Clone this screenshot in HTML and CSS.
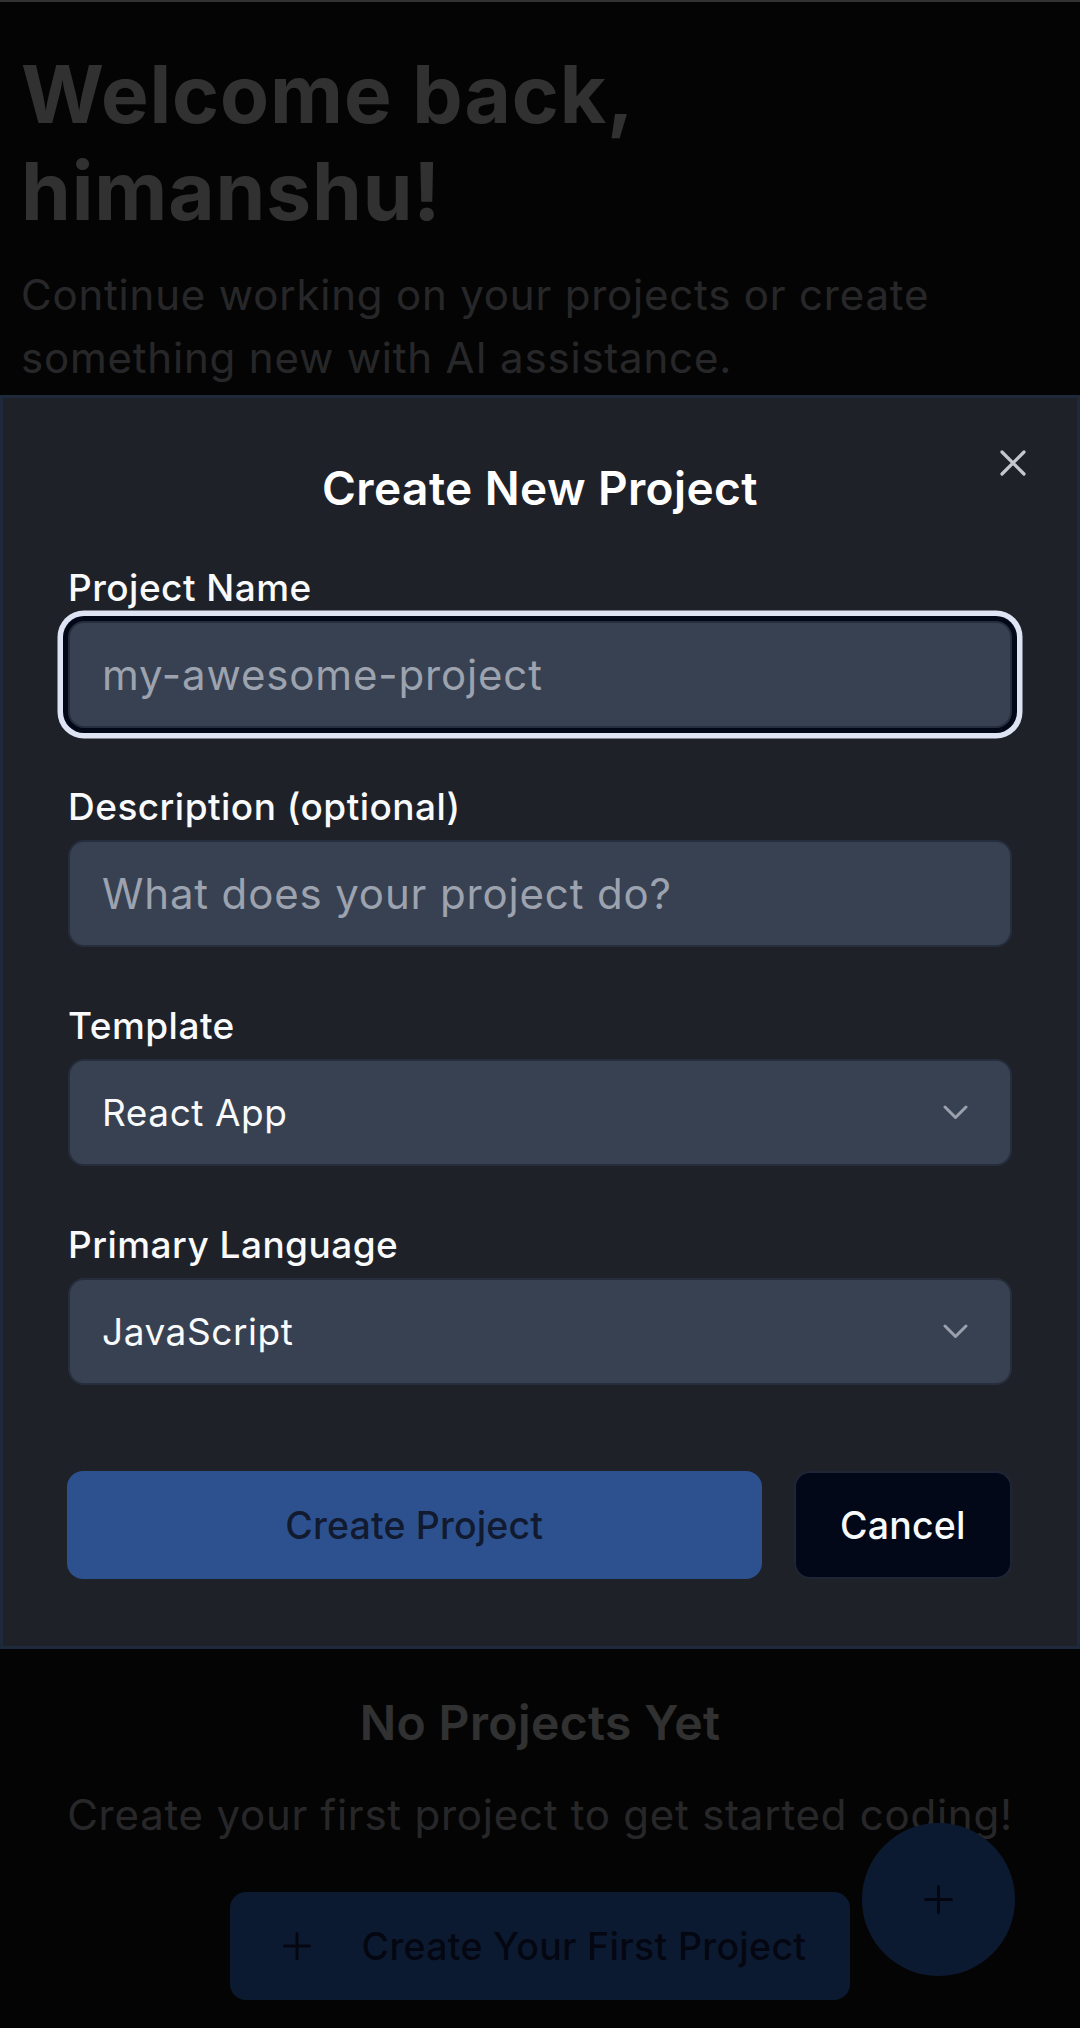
FILE: index.html
```html
<!DOCTYPE html>
<html lang="en">
<head>
<meta charset="utf-8">
<title>Dashboard – Create New Project</title>
<link rel="stylesheet" href="styles.css">
</head>
<body>
  <div class="page">
    <header class="welcome">
      <h1 class="welcome-title">Welcome back,<br>himanshu!</h1>
      <p class="welcome-sub">Continue working on your projects or create something new with AI assistance.</p>
    </header>

    <section class="empty">
      <h2 class="empty-title">No Projects Yet</h2>
      <p class="empty-text">Create your first project to get started coding!</p>
      <button class="btn-first" type="button">
        <svg class="icon-plus" viewBox="0 0 28 28" aria-hidden="true"><path d="M14 1.5V26.5M1.5 14H26.5"/></svg>
        <span>Create Your First Project</span>
      </button>
    </section>

    <button class="fab" type="button" aria-label="New project">
      <svg class="icon-plus" viewBox="0 0 28 28" aria-hidden="true"><path d="M14 1.5V26.5M1.5 14H26.5"/></svg>
    </button>
  </div>

  <div class="overlay"></div>

  <div class="modal" role="dialog" aria-labelledby="modal-title">
    <button class="modal-close" type="button" aria-label="Close">
      <svg viewBox="0 0 26 26" aria-hidden="true"><path d="M2 2L24 24M24 2L2 24"/></svg>
    </button>
    <h2 class="modal-title" id="modal-title">Create New Project</h2>
    <form class="form">
      <div class="field">
        <label class="label" for="pname">Project Name</label>
        <input class="input input-focused" id="pname" type="text" placeholder="my-awesome-project">
      </div>
      <div class="field">
        <label class="label" for="pdesc">Description (optional)</label>
        <input class="input" id="pdesc" type="text" placeholder="What does your project do?">
      </div>
      <div class="field">
        <label class="label">Template</label>
        <div class="select" role="combobox" aria-expanded="false">
          <span>React App</span>
          <svg class="chevron" viewBox="0 0 25 15" aria-hidden="true"><path d="M2 2L12.5 12.5L23 2"/></svg>
        </div>
      </div>
      <div class="field">
        <label class="label">Primary Language</label>
        <div class="select" role="combobox" aria-expanded="false">
          <span>JavaScript</span>
          <svg class="chevron" viewBox="0 0 25 15" aria-hidden="true"><path d="M2 2L12.5 12.5L23 2"/></svg>
        </div>
      </div>
      <div class="actions">
        <button class="btn-create" type="button">Create Project</button>
        <button class="btn-cancel" type="button">Cancel</button>
      </div>
    </form>
  </div>
</body>
</html>
```

FILE: styles.css
```css
* { box-sizing: border-box; }

html, body {
  margin: 0;
  padding: 0;
}

body {
  background: #161616;
  font-family: Inter, "Noto Sans", "Liberation Sans", sans-serif;
  color: #f5f5f5;
  width: 1080px;
  height: 2028px;
  overflow: hidden;
}

.page {
  border-top: 2px solid #ffffff;
  padding: 43px 21px 0;
  height: 2028px;
}

.welcome-title {
  margin: 0;
  font-size: 80px;
  line-height: 97px;
  font-weight: 700;
  letter-spacing: 0.9px;
  color: #f5f5f5;
}

.welcome-sub {
  margin: 24px 0 0;
  font-size: 42px;
  line-height: 63px;
  letter-spacing: 0.8px;
  color: #c0c3cc;
}

.empty {
  margin-top: 1297px;
  display: flex;
  flex-direction: column;
  align-items: center;
  text-align: center;
}

.empty-title {
  margin: 0;
  font-size: 48px;
  line-height: 74px;
  font-weight: 600;
  letter-spacing: 0.4px;
  color: #f5f5f5;
}

.empty-text {
  margin: 23px 0 0;
  font-size: 42px;
  line-height: 63px;
  letter-spacing: 0.76px;
  color: #c0c3cc;
  white-space: nowrap;
}

.btn-first {
  margin-top: 46px;
  height: 108px;
  display: flex;
  align-items: center;
  gap: 51px;
  padding: 0 44px 0 53px;
  border: none;
  border-radius: 16px;
  background: #3b82f6;
  color: #172554;
  font-family: inherit;
  font-size: 37.5px;
  font-weight: 500;
  letter-spacing: 0.3px;
}

.icon-plus {
  width: 28px;
  height: 28px;
  fill: none;
  stroke: currentColor;
  stroke-width: 3;
  stroke-linecap: round;
}

.fab {
  position: fixed;
  right: 65px;
  bottom: 52px;
  width: 153px;
  height: 153px;
  border-radius: 50%;
  border: none;
  background: #3b82f6;
  color: #172554;
  display: flex;
  align-items: center;
  justify-content: center;
  padding: 0;
}

.fab .icon-plus {
  width: 29px;
  height: 29px;
}

.overlay {
  position: fixed;
  inset: 0;
  background: rgba(0, 0, 0, 0.8);
}

.modal {
  position: fixed;
  top: 395px;
  left: 0;
  right: 0;
  background: #1f2128;
  border: 3px solid #1e293b;
  padding: 53px 65px 67px;
}

.modal-close {
  position: absolute;
  top: 52px;
  right: 51px;
  width: 26px;
  height: 26px;
  padding: 0;
  border: none;
  background: transparent;
  display: flex;
}

.modal-close svg {
  width: 26px;
  height: 26px;
  fill: none;
  stroke: #c4c7ce;
  stroke-width: 3.2;
  stroke-linecap: round;
}

.modal-title {
  margin: 0;
  text-align: center;
  font-size: 46px;
  line-height: 74px;
  font-weight: 600;
  color: #ffffff;
  letter-spacing: 0.4px;
}

.form {
  margin-top: 37px;
  display: flex;
  flex-direction: column;
  gap: 53px;
}

.field {
  display: flex;
  flex-direction: column;
}

.label {
  display: block;
  font-size: 37px;
  line-height: 52px;
  font-weight: 500;
  letter-spacing: 0.47px;
  color: #f8fafc;
  margin-bottom: 7px;
}

.input,
.select {
  height: 107px;
  width: 100%;
  border: 2px solid #262e3d;
  border-radius: 16px;
  background: #384152;
  color: #f9fafb;
  font-family: inherit;
  font-size: 42px;
  letter-spacing: 0.85px;
  padding: 0 32px;
  outline: none;
}

.input::placeholder {
  color: #9ca3af;
  opacity: 1;
}

.input-focused {
  box-shadow: 0 0 0 5px #020817, 0 0 0 10.5px #dfe4f4;
}

.select {
  display: flex;
  align-items: center;
  justify-content: space-between;
  padding-right: 42px;
  font-size: 37px;
  letter-spacing: 0.55px;
}

.chevron {
  width: 25px;
  height: 15px;
  fill: none;
  stroke: #9aa1ad;
  stroke-width: 3;
  stroke-linecap: round;
  stroke-linejoin: round;
}

.actions {
  margin-top: 33px;
  display: flex;
  gap: 32px;
}

.btn-create,
.btn-cancel {
  height: 108px;
  border-radius: 16px;
  font-family: inherit;
  font-size: 37.5px;
  font-weight: 500;
  letter-spacing: 0.15px;
}

.btn-create {
  flex: 1;
  border: none;
  background: #2d518f;
  color: #111a2e;
  margin-left: -1px;
}

.btn-cancel {
  padding: 0 44.5px;
  background: #020817;
  border: 2px solid #1e2536;
  color: #f8fafc;
}
```
